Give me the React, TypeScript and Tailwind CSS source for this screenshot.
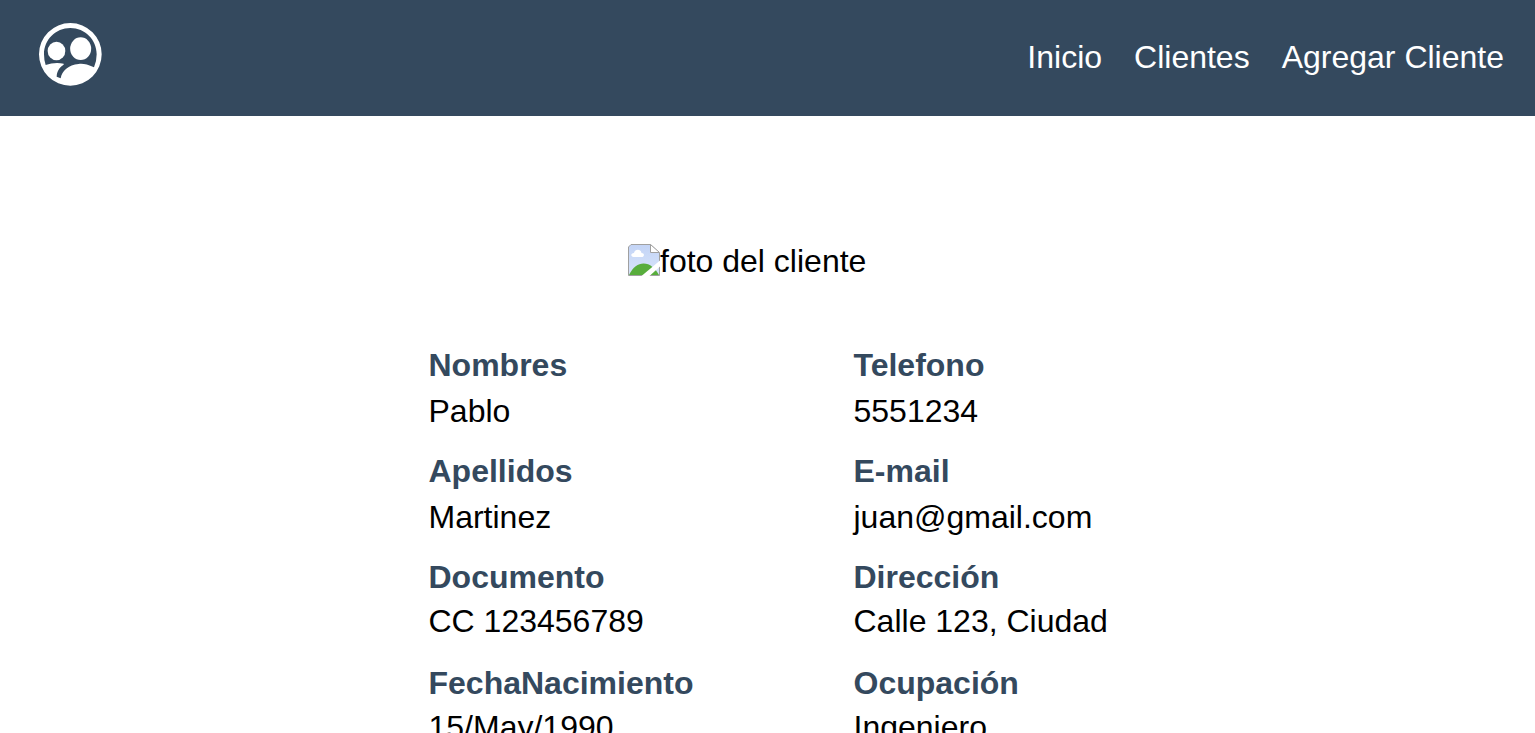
const left = [
  ["Nombres", "Pablo"],
  ["Apellidos", "Martinez"],
  ["Documento", "CC 123456789"],
  ["FechaNacimiento", "15/May/1990"],
];
const right = [
  ["Telefono", "5551234"],
  ["E-mail", "juan@gmail.com"],
  ["Dirección", "Calle 123, Ciudad"],
  ["Ocupación", "Ingeniero"],
];

function Column({ rows }: { rows: string[][] }) {
  return (
    <dl className="flex w-[425px] flex-col">
      {rows.map(([label, value], i) => (
        <div key={label} className="h-[106px]">
          <dt className={i < 2 ? "h-[46px] font-bold text-[#34495e]" : "h-11 font-bold text-[#34495e]"}>
            {label}
          </dt>
          <dd>{value}</dd>
        </div>
      ))}
    </dl>
  );
}

function UsersLogo() {
  return (
    <svg className="mb-1.5 size-[66px]" viewBox="54 66 198 198" fill="currentColor">
      <path
        fillRule="evenodd"
        d="M151 69a94 94 0 1 0 0 188a94 94 0 1 0 0-188ZM151 84C195 84 230 119 230 163Q230 184 222 202C202 193 188 190 176 192C145 195 126 212 122 235L110 230C111 215 117 203 130 195Q132 193 131 191C115 187 95 188 77 195Q72 180 72 163C72 119 107 84 151 84Z"
      />
      <ellipse cx="109.500" cy="153" rx="26.500" ry="28" />
      <ellipse cx="182" cy="146" rx="31.500" ry="34" />
    </svg>
  );
}

function BrokenImage() {
  return (
    <svg className="mt-px size-8" viewBox="0 0 32 32">
      <defs>
        <linearGradient id="sky" x1="0" y1="0" x2="0" y2="1">
          <stop offset="0" stopColor="#c3d4f6" />
          <stop offset="1" stopColor="#d8e4fa" />
        </linearGradient>
      </defs>
      <path d="M.5 3L3 .5H22.500L31.500 9V31.500H.5Z" fill="url(#sky)" stroke="#a0a0a0" />
      <path d="M1 31C5 23 10 19.500 15.500 19.500C22 19.500 27 24 31 31Z" fill="#58ad3c" />
      <path d="M5.500 13C2.500 13 2.500 9 6 9C7 4.500 13 5 13.500 9C17 9 16.500 13 13.500 13Z" fill="#fff" />
      <path d="M22.500 .5V8.500H31.500Z" fill="#fff" stroke="#a0a0a0" />
      <path d="M32 16.500L13.500 32H21.500L32 22.500Z" fill="#fff" />
    </svg>
  );
}

export default function App() {
  return (
    <div className="h-[733px] overflow-hidden bg-white font-['Liberation_Sans',Arial,sans-serif] text-[32px] leading-[37px] text-black">
      <header className="flex h-[116px] items-center justify-between bg-[#34495e] pl-[38px] pr-[31px] text-white">
        <UsersLogo />
        <nav className="mb-0.5 flex gap-8">
          <a>Inicio</a>
          <a>Clientes</a>
          <a>Agregar Cliente</a>
        </nav>
      </header>
      <main className="pt-[127px]">
        <div className="flex pl-[628px]">
          <BrokenImage />
          <span>foto del cliente</span>
        </div>
        <div className="flex pl-[428.5px] pt-[67px]">
          <Column rows={left} />
          <Column rows={right} />
        </div>
      </main>
    </div>
  );
}
